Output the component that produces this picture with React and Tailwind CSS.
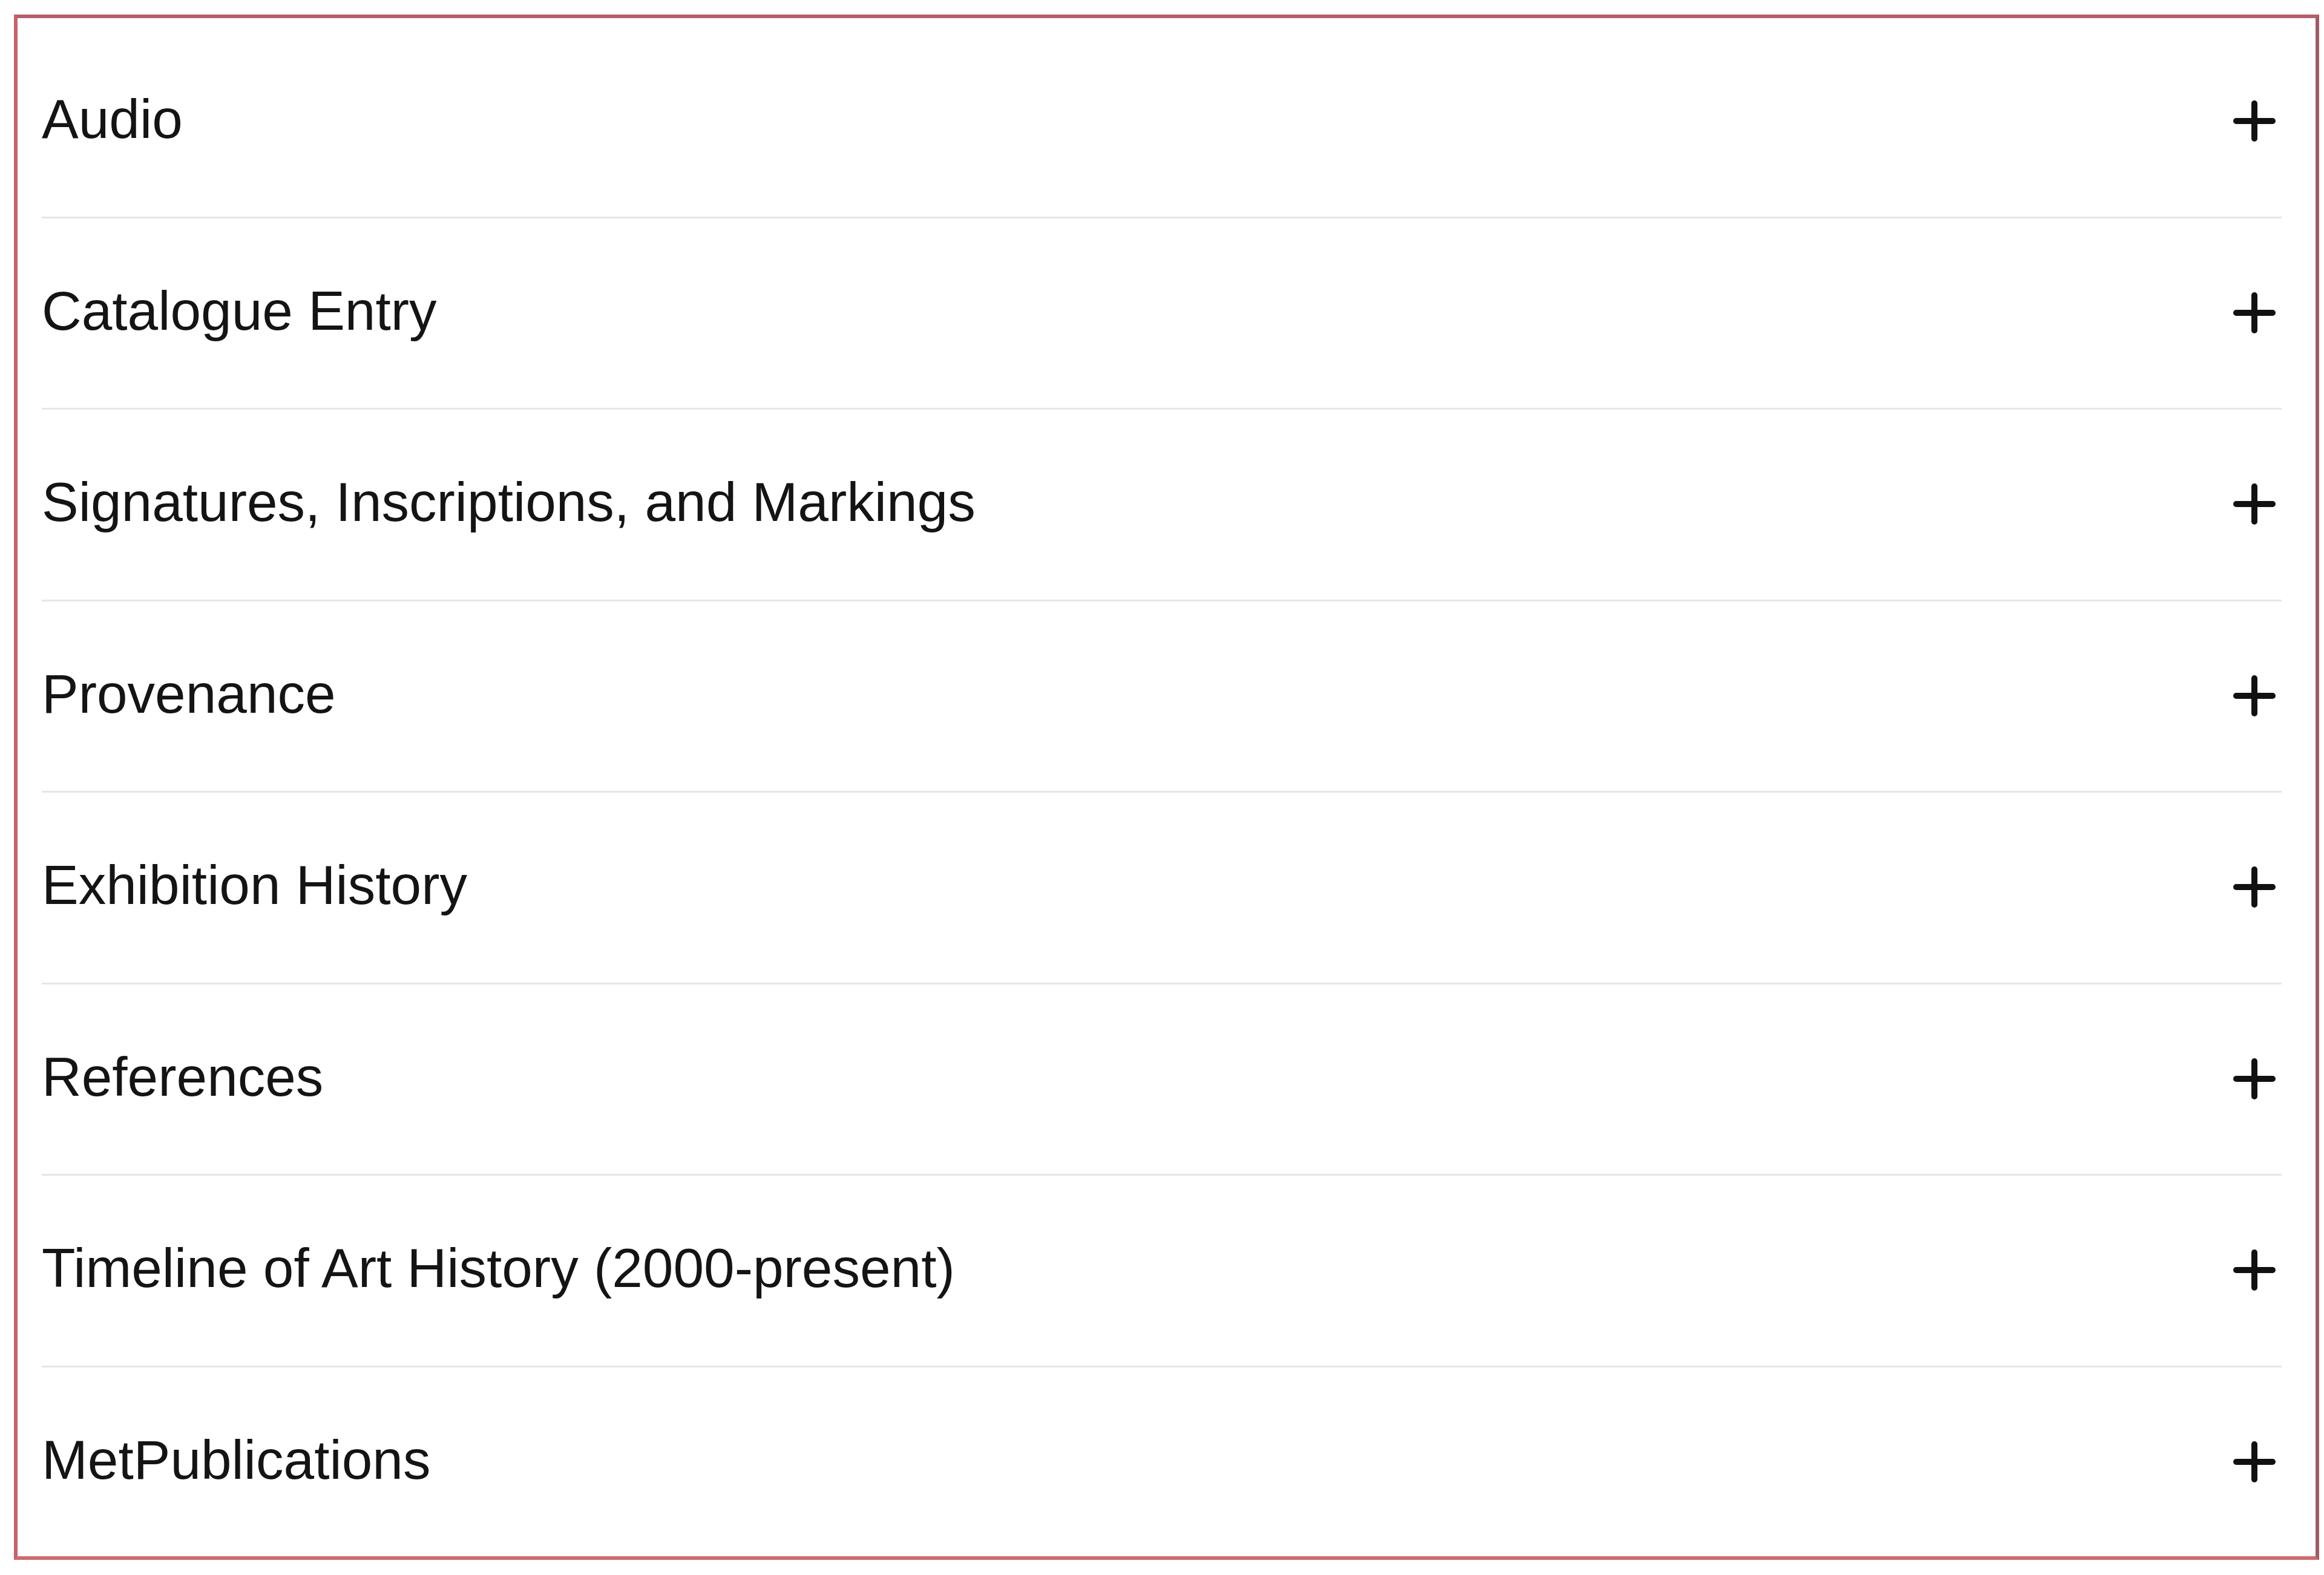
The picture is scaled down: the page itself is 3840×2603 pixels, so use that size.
import React from "react";

const items = [
  "Audio",
  "Catalogue Entry",
  "Signatures, Inscriptions, and Markings",
  "Provenance",
  "Exhibition History",
  "References",
  "Timeline of Art History (2000-present)",
  "MetPublications",
];

function Plus() {
  return (
    <svg width="70" height="68" viewBox="0 0 70 68" className="mt-[7px] shrink-0">
      <line x1="5" y1="34" x2="65" y2="34" stroke="#111" strokeWidth="10" strokeLinecap="round" />
      <line x1="35" y1="5" x2="35" y2="63" stroke="#111" strokeWidth="10" strokeLinecap="round" />
    </svg>
  );
}

export default function App() {
  return (
    <div className="w-[3840px] h-[2603px] bg-white pl-[23px] pt-[24px]" style={{ fontFamily: '"Liberation Sans", Arial, sans-serif' }}>
      <div className="w-[3809px] h-[2554px] border-[6px] border-t-[#b4606c] border-r-[#a05a68] border-b-[#cf6a6b] border-l-[#c9626c] pl-[40px] pr-[56px] pt-[14px]">
        {items.map((t, i) => (
          <div
            key={t}
            className={
              "flex items-center justify-between pb-[8px] pr-[10px] " +
              (i < items.length - 1 ? "h-[316.5px] border-b-[3px] border-[#e6e6e6]" : "h-[313.5px]")
            }
          >
            <span className="text-[91px] leading-none text-[#141414]">{t}</span>
            <Plus />
          </div>
        ))}
      </div>
    </div>
  );
}
